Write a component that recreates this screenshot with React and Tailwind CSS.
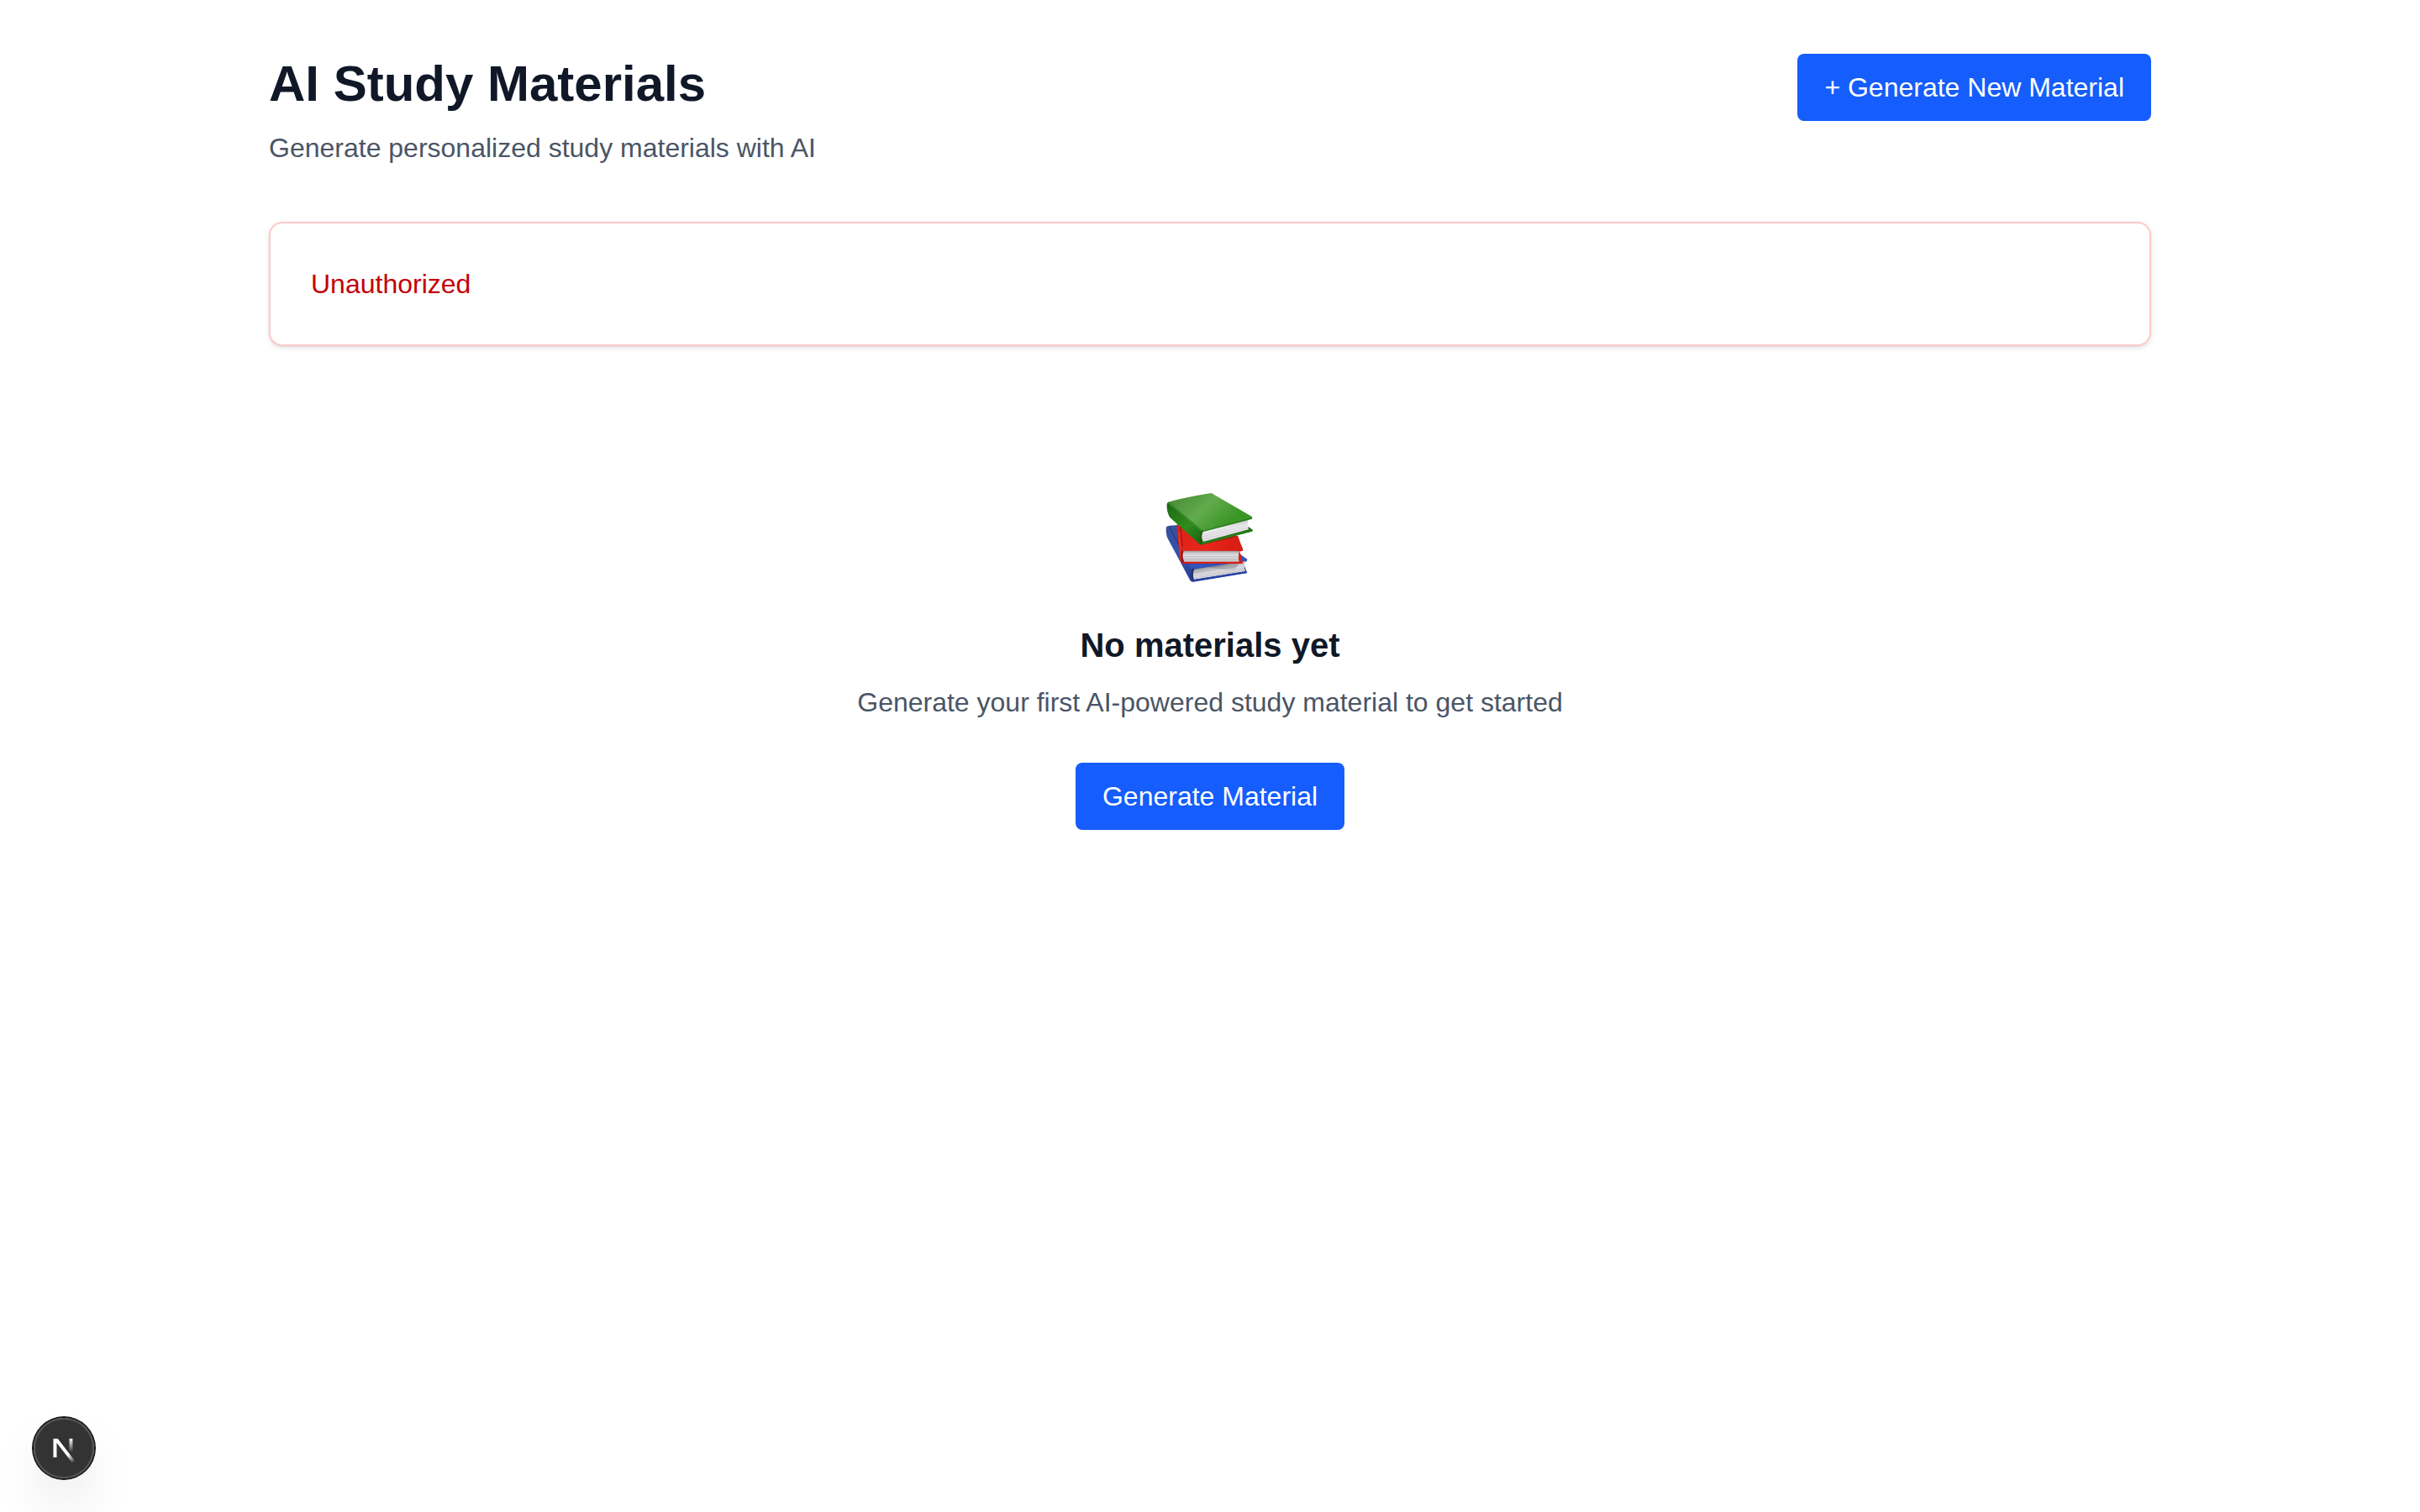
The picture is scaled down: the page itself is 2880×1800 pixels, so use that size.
function BooksIcon() {
  return (
    <svg className="h-[132px] w-40" viewBox="0 18 480 396" role="img" aria-label="Books">
      <defs>
        <linearGradient id="greenCover" x1="150" y1="60" x2="270" y2="190" gradientUnits="userSpaceOnUse">
          <stop offset="0" stopColor="#4f943c" />
          <stop offset="0.45" stopColor="#62ab4d" />
          <stop offset="1" stopColor="#3b9627" />
        </linearGradient>
        <linearGradient id="greenSpine" x1="90" y1="90" x2="210" y2="220" gradientUnits="userSpaceOnUse">
          <stop offset="0" stopColor="#1f6a14" />
          <stop offset="0.6" stopColor="#2f8c1d" />
          <stop offset="1" stopColor="#1d6612" />
        </linearGradient>
        <linearGradient id="pagesTop" x1="290" y1="155" x2="300" y2="215" gradientUnits="userSpaceOnUse">
          <stop offset="0" stopColor="#b5b3b7" />
          <stop offset="0.35" stopColor="#efeef1" />
          <stop offset="1" stopColor="#d9d8dc" />
        </linearGradient>
        <linearGradient id="redCover" x1="150" y1="170" x2="300" y2="260" gradientUnits="userSpaceOnUse">
          <stop offset="0" stopColor="#dc2318" />
          <stop offset="0.6" stopColor="#ea261a" />
          <stop offset="1" stopColor="#d91e14" />
        </linearGradient>
        <linearGradient id="pagesMid" x1="240" y1="255" x2="240" y2="297" gradientUnits="userSpaceOnUse">
          <stop offset="0" stopColor="#8f8c8e" />
          <stop offset="0.35" stopColor="#e4e3e5" />
          <stop offset="1" stopColor="#c4c2c5" />
        </linearGradient>
        <linearGradient id="blueSpine" x1="85" y1="190" x2="180" y2="350" gradientUnits="userSpaceOnUse">
          <stop offset="0" stopColor="#34509f" />
          <stop offset="0.5" stopColor="#3552ac" />
          <stop offset="1" stopColor="#283e93" />
        </linearGradient>
        <linearGradient id="pagesLow" x1="270" y1="305" x2="280" y2="355" gradientUnits="userSpaceOnUse">
          <stop offset="0" stopColor="#96949a" />
          <stop offset="0.45" stopColor="#e0dfe3" />
          <stop offset="1" stopColor="#cbcacf" />
        </linearGradient>
      </defs>
      {/* blue book */}
      <path d="M84 172Q88 166 124 166L200 240L373 288L371 294L358 300L371 331L371 337L180 368Q172 370 168 361L87 209Q81 188 84 172Z" fill="url(#blueSpine)" />
      <path d="M183 322L366 292Q358 312 367 331L182 360Q174 340 183 322Z" fill="url(#pagesLow)" />
      <path d="M184 338L362 309M183 347L363 319M183 354L365 326" stroke="#b1b0b6" strokeWidth="1.5" fill="none" />
      <path d="M142 298L345 268L373 287L371 293L183 323Q175 324 168 316Z" fill="#3453b9" />
      <path d="M181 320Q173 340 180 363" stroke="#22306b" strokeWidth="6" fill="none" />
      <path d="M179 364L371 333" stroke="#2443a8" strokeWidth="6" fill="none" />
      <path d="M230 315L350 296L330 322Q280 328 230 315Z" fill="#202840" opacity="0.2" />
      <path d="M96 172L164 308" stroke="#20357e" strokeWidth="3" fill="none" />
      {/* red book */}
      <path d="M122 163L180 170L340 205L358 256L343 262L356 298L353 303L146 303Q138 302 134 293L122 190Z" fill="#cf1f16" />
      <path d="M144 255L346 257Q339 277 344 296L148 296Q138 275 144 255Z" fill="url(#pagesMid)" />
      <path d="M148 270H343M147 278H342M147 287H343" stroke="#b3b0b3" strokeWidth="1.5" fill="none" />
      <path d="M124 164L200 190L336 204L358 252L357 257L147 257Q138 255 134 245Z" fill="url(#redCover)" />
      <path d="M133 170L142 244" stroke="#9a130c" strokeWidth="3" fill="none" />
      <path d="M129 190L136 286" stroke="#ee4237" strokeWidth="3" fill="none" />
      <path d="M143 257Q135 277 144 297" stroke="#8e130f" strokeWidth="6" fill="none" />
      <path d="M143 300H354L345 263" stroke="#d81e17" strokeWidth="5" fill="none" />
      <path d="M140 174L207 237L320 213L336 204L180 170Z" fill="#7c100b" opacity="0.3" />
      {/* green book */}
      <path d="M86 91Q88 82 98 82L210 180L378 172L393 183L390 188L212 235Q205 237 199 230L96 137Q84 116 86 91Z" fill="url(#greenSpine)" />
      <path d="M215 185L377 144Q372 164 378 181L216 225Q205 205 215 185Z" fill="url(#pagesTop)" />
      <path d="M214 199L374 158M213 207L374 166M214 216L376 174" stroke="#c3c1c7" strokeWidth="1.5" fill="none" />
      <path d="M91 84Q128 70 245 51L391 136L390 142L216 187Q208 188 203 182L94 90Z" fill="url(#greenCover)" />
      <path d="M100 85Q103 94 116 105L209 184" stroke="#2f8620" strokeWidth="4" fill="none" />
      <path d="M216 187L390 141" stroke="#237a16" strokeWidth="4" fill="none" />
      <path d="M214 184Q202 204 210 230" stroke="#1c5a11" strokeWidth="6" fill="none" />
      <path d="M211 231L391 184" stroke="#287f1a" strokeWidth="6" fill="none" />
    </svg>
  );
}

function NextMark() {
  return (
    <svg className="size-full" viewBox="0 0 36 36" fill="none" aria-hidden="true">
      <defs>
        <linearGradient id="markDiagonal" x1="9.95555" y1="11.1226" x2="15.4778" y2="17.9671" gradientUnits="userSpaceOnUse">
          <stop stopColor="white" />
          <stop offset="0.7" stopColor="white" stopOpacity="0" />
        </linearGradient>
        <linearGradient id="markStem" x1="11.8222" y1="1.40039" x2="11.792" y2="9.62542" gradientUnits="userSpaceOnUse">
          <stop stopColor="white" />
          <stop offset="1" stopColor="white" stopOpacity="0" />
        </linearGradient>
        <clipPath id="markClip">
          <rect x="0" y="1.5" width="16" height="16" />
        </clipPath>
      </defs>
      <g transform="translate(10.4 10.85)" strokeWidth="2">
        <path d="M13.3 15.2 L2.34 1 V12.6" stroke="url(#markDiagonal)" clipPath="url(#markClip)" />
        <path d="M11.825 1.5 V13.1" stroke="url(#markStem)" />
      </g>
    </svg>
  );
}

function Button({ children }) {
  return (
    <button type="button" className="rounded-lg bg-blue-600 px-8 py-4 text-white">
      {children}
    </button>
  );
}

export default function App() {
  return (
    <div className="min-h-screen bg-white font-['Liberation_Sans',Arial,sans-serif] text-[32px] leading-[48px] text-gray-900">
      <main className="mx-auto max-w-[2304px] px-8 py-16">
        <header className="mb-16 flex items-start justify-between gap-8">
          <div>
            <h1 className="mb-4 text-[60px] leading-[72px] font-bold">AI Study Materials</h1>
            <p className="text-gray-600">Generate personalized study materials with AI</p>
          </div>
          <Button>+ Generate New Material</Button>
        </header>

        <div
          role="alert"
          className="rounded-2xl border-2 border-red-200 bg-white p-12 text-red-700 shadow-[0_2px_6px_rgb(0_0_0/0.1),0_2px_4px_-2px_rgb(0_0_0/0.1)]"
        >
          <p>Unauthorized</p>
        </div>

        <section className="mt-16 flex flex-col items-center py-[100px] text-center">
          <BooksIcon />
          <h2 className="mt-8 mb-4 text-[40px] leading-[56px] font-bold">No materials yet</h2>
          <p className="mb-12 text-gray-600">Generate your first AI-powered study material to get started</p>
          <Button>Generate Material</Button>
        </section>
      </main>

      <button
        type="button"
        aria-label="Open Next.js Dev Tools"
        className="fixed bottom-10 left-10 size-[72px] rounded-full bg-black/80 shadow-[0_0_0_2px_#171717,inset_0_0_0_2px_rgb(255_255_255/0.14),0_32px_64px_-16px_rgb(0_0_0/0.24)]"
      >
        <NextMark />
      </button>
    </div>
  );
}
